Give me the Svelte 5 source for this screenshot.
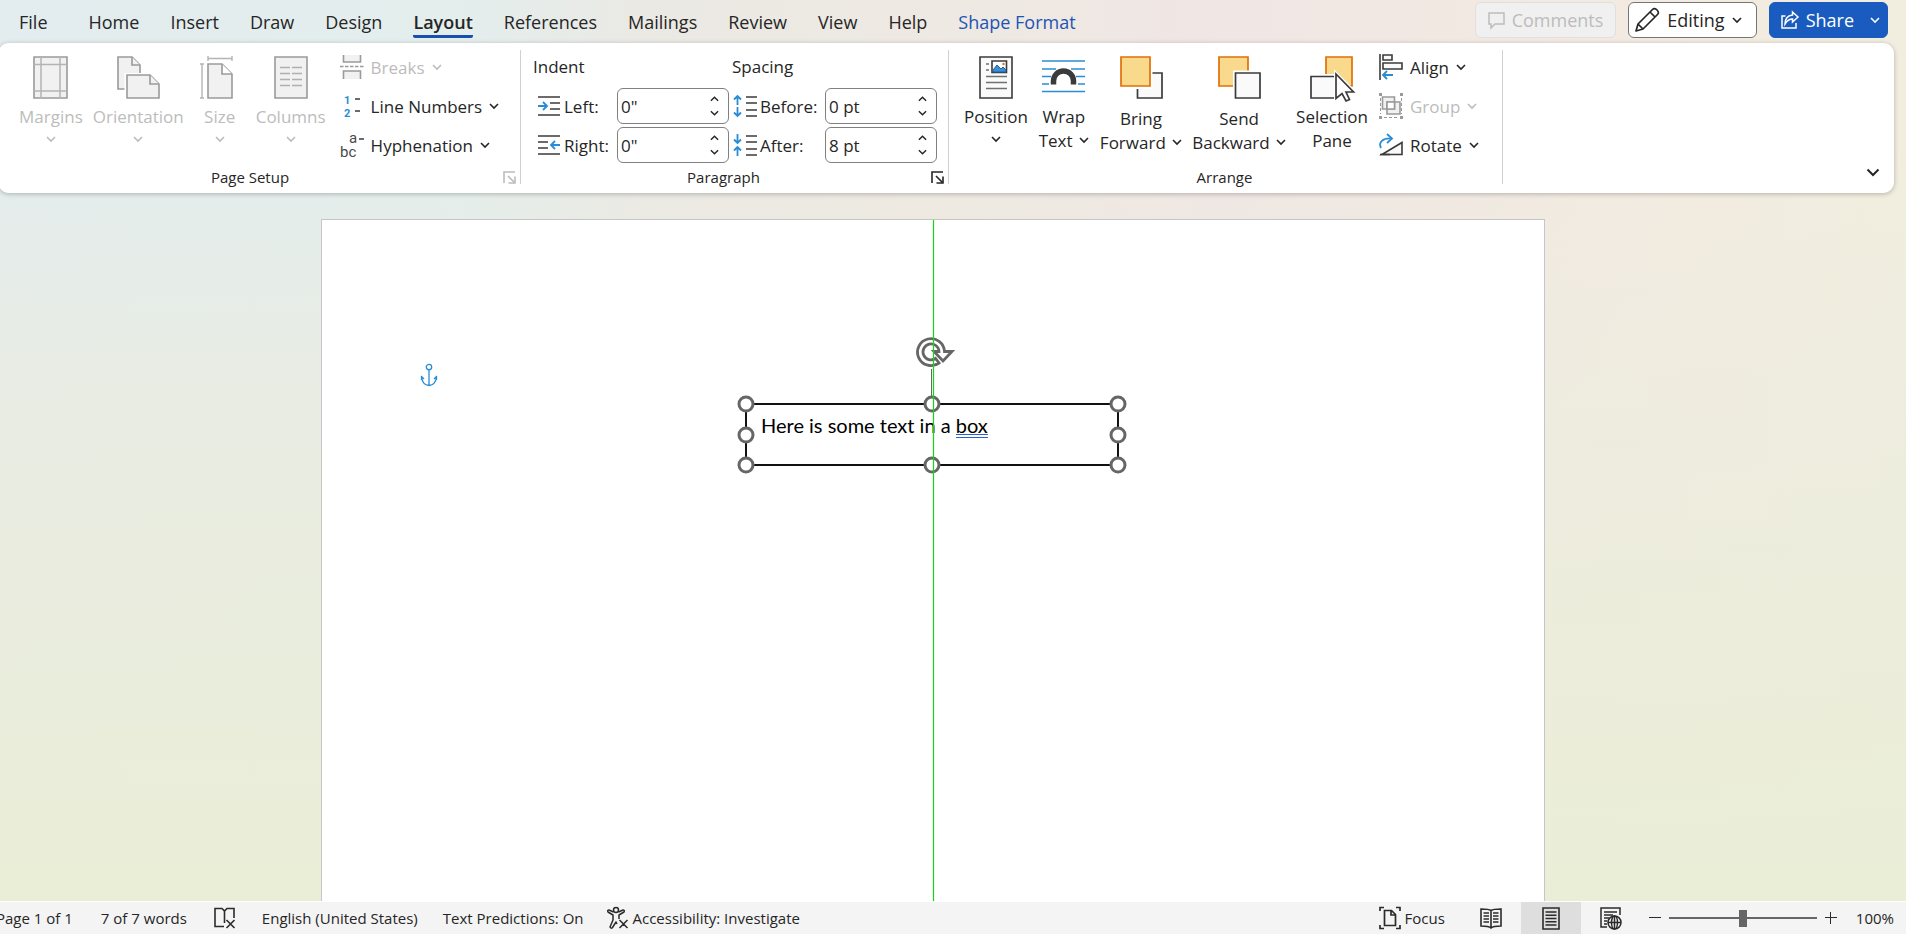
<script>
	let tabs = ["File", "Home", "Insert", "Draw", "Design", "Layout", "References", "Mailings", "Review", "View", "Help", "Shape Format"]
	let active = "Layout"
	let indentLeft = '0"'
	let indentRight = '0"'
	let before = "0 pt"
	let after = "8 pt"
	let zoom = 50
	let handles = ["nw", "n", "ne", "w", "e", "sw", "s", "se"]
</script>

{#snippet chevron()}
	<svg class="chevron" width="10" height="6" viewBox="0 0 10 6"><path d="M1 1l4 4 4-4" /></svg>
{/snippet}

{#snippet launcher()}
	<svg width="13" height="13" viewBox="0 0 13 13" fill="none" stroke="currentColor" stroke-width="1.6">
		<path d="M1 12V1h11M5 5l6 6M12 5.500v6.500H5.500" />
	</svg>
{/snippet}

<div class="window">
	<header>
		<nav>
			{#each tabs as tab}
				<button class="tab" class:active={tab == active} class:context={tab == "Shape Format"} on:click={() => active = tab}><span>{tab}</span></button>
			{/each}
		</nav>
		<div class="actions">
			<button class="action comments" disabled>
				<svg width="17" height="17" viewBox="0 0 17 17" fill="none" stroke="currentColor" stroke-width="1.5"><path d="M1 1h15v11H7l-4 4v-4H1z" /></svg>
				Comments
			</button>
			<button class="action editing">
				<svg width="26" height="26" viewBox="0 0 26 26" fill="none" stroke="currentColor" stroke-width="1.7" stroke-linejoin="round">
					<path d="M2 24l2-7L18.500 2.500q2-2 4.500.5t.5 4.500L9 22zM16 5l5 5M4 17l5 5" />
				</svg>
				Editing {@render chevron()}
			</button>
			<button class="action share">
				<svg width="18" height="18" viewBox="0 0 18 18" fill="none" stroke="currentColor" stroke-width="1.5">
					<path d="M4.500 5H1v12h14v-5M11.500 1l5.500 5-5.500 5V8Q7 8 4 13q0-8 7.500-9z" />
				</svg>
				Share <span class="share-more">{@render chevron()}</span>
			</button>
		</div>
	</header>

	<section class="ribbon">
		<div class="group setup">
			<div class="tools">
				<button class="big" disabled>
					<svg width="35" height="43" viewBox="0 0 35 43" fill="none">
						<path d="M1 1h33v41H1z" fill="#f1f1f1" stroke="#9a9a9a" stroke-width="1.600" />
						<path d="M8 1v41M27 1v41M1 8.500h33M1 35h33" stroke="#b4b4b4" stroke-width="1.500" />
					</svg>
					<span>Margins</span>
					{@render chevron()}
				</button>
				<button class="big" disabled>
					<svg width="43" height="43" viewBox="0 0 43 43" fill="#f1f1f1" stroke="#9a9a9a" stroke-width="1.600">
						<path d="M1 1h14l8 8v24H1z" />
						<path d="M15 1v8h8" />
						<path d="M7.500 17h27v26h-27z" fill="#fff" stroke="none" />
						<path d="M10 19h23l9 9v14H10z" />
						<path d="M33 19v9h9" />
					</svg>
					<span>Orientation</span>
					{@render chevron()}
				</button>
				<button class="big" disabled>
					<svg width="40" height="43" viewBox="0 0 40 43" fill="none" stroke="#9a9a9a" stroke-width="1.600">
						<path d="M8 8h14l10 10v24H8z" fill="#f1f1f1" />
						<path d="M22 8v10h10" fill="#fff" />
						<path d="M8 2.500h24M8 0v5M32 0v5M2 8v34M0 8h4M0 42h4" stroke="#b4b4b4" stroke-width="1.400" />
					</svg>
					<span>Size</span>
					{@render chevron()}
				</button>
				<button class="big" disabled>
					<svg width="34" height="43" viewBox="0 0 34 43" fill="none">
						<path d="M1 1h32v41H1z" fill="#f1f1f1" stroke="#9a9a9a" stroke-width="1.600" />
						<path d="M6 11.500h10M18 11.500h10M6 17.500h10M18 17.500h10M6 23.500h10M18 23.500h10M6 29.500h10M18 29.500h10" stroke="#b0b0b0" stroke-width="1.600" />
					</svg>
					<span>Columns</span>
					{@render chevron()}
				</button>
				<div class="stack">
					<button class="small" disabled>
						<svg width="24" height="24" viewBox="0 0 24 24" fill="#f1f1f1" stroke="#9a9a9a" stroke-width="1.600">
							<path d="M3.500 0v7h17V0M3.500 24v-8h17v8" />
							<path d="M0 11.500h24" stroke-dasharray="3.500 1.500" />
						</svg>
						Breaks {@render chevron()}
					</button>
					<button class="small">
						<svg width="24" height="24" viewBox="0 0 24 24">
							<text class="numeral" x="4" y="10">1</text>
							<text class="numeral" x="4" y="23">2</text>
							<path d="M15 5h5M15 17h5" stroke="#3b3b3b" stroke-width="1.600" />
						</svg>
						Line Numbers {@render chevron()}
					</button>
					<button class="small">
						<svg width="24" height="26" viewBox="0 0 24 26">
							<text class="letters" x="9" y="11">a</text>
							<text class="letters" x="0" y="25">bc</text>
							<path d="M19 7h5" stroke="#3b3b3b" stroke-width="1.500" />
						</svg>
						Hyphenation {@render chevron()}
					</button>
				</div>
			</div>
			<footer>Page Setup<button class="launch" disabled aria-label="Page Setup settings">{@render launcher()}</button></footer>
		</div>

		<div class="group paragraph">
			<div class="fields">
				<div class="heading">Indent</div>
				<div class="heading spacing">Spacing</div>

				<label for="indent-left">
					<svg width="24" height="24" viewBox="0 0 24 24" fill="none" stroke="#3b3b3b" stroke-width="1.600">
						<path d="M1 3h22M13 9h10M13 15h10M1 21h22" />
						<path class="blue" d="M1 12h9M6 8l4 4-4 4" />
					</svg>
					Left:
				</label>
				<div class="spin">
					<input id="indent-left" type="text" bind:value={indentLeft}>
					<div class="arrows">
						<button class="up" aria-label="Increase left indent">{@render chevron()}</button>
						<button aria-label="Decrease left indent">{@render chevron()}</button>
					</div>
				</div>
				<label for="space-before">
					<svg width="24" height="24" viewBox="0 0 24 24" fill="none" stroke="#3b3b3b" stroke-width="1.600">
						<path d="M13 3h11M13 9h11M13 16h11M13 22h11" />
						<path class="blue" d="M4.500 11V2M1 5.500L4.500 2 8 5.500M4.500 13v9M1 18.500L4.500 22 8 18.500" />
					</svg>
					Before:
				</label>
				<div class="spin">
					<input id="space-before" type="text" bind:value={before}>
					<div class="arrows">
						<button class="up" aria-label="Increase spacing before">{@render chevron()}</button>
						<button aria-label="Decrease spacing before">{@render chevron()}</button>
					</div>
				</div>

				<label for="indent-right">
					<svg width="24" height="24" viewBox="0 0 24 24" fill="none" stroke="#3b3b3b" stroke-width="1.600">
						<path d="M1 3h22M1 9h10M1 15h10M1 21h22" />
						<path class="blue" d="M14 12h9M18 8l-4 4 4 4" />
					</svg>
					Right:
				</label>
				<div class="spin">
					<input id="indent-right" type="text" bind:value={indentRight}>
					<div class="arrows">
						<button class="up" aria-label="Increase right indent">{@render chevron()}</button>
						<button aria-label="Decrease right indent">{@render chevron()}</button>
					</div>
				</div>
				<label for="space-after">
					<svg width="24" height="24" viewBox="0 0 24 24" fill="none" stroke="#3b3b3b" stroke-width="1.600">
						<path d="M13 3h11M13 9h11M13 16h11M13 22h11" />
						<path class="blue" d="M4.500 1v9M1 6.500L4.500 10 8 6.500M4.500 23v-9M1 17.500L4.500 14 8 17.500" />
					</svg>
					After:
				</label>
				<div class="spin">
					<input id="space-after" type="text" bind:value={after}>
					<div class="arrows">
						<button class="up" aria-label="Increase spacing after">{@render chevron()}</button>
						<button aria-label="Decrease spacing after">{@render chevron()}</button>
					</div>
				</div>
			</div>
			<footer>Paragraph<button class="launch" aria-label="Paragraph settings">{@render launcher()}</button></footer>
		</div>

		<div class="group arrange">
			<div class="tools">
				<button class="big">
					<svg width="34" height="43" viewBox="0 0 34 43" fill="none">
						<path d="M1 1h32v41H1z" fill="#fafafa" stroke="#3b3b3b" stroke-width="1.600" />
						<path d="M13 5h14.500v11.500H13z" fill="#fff" stroke="#3b3b3b" stroke-width="1.600" />
						<path d="M14 14l4-5 4 4 2-2 3 3v2H14z" fill="#3d8fd1" stroke="#1a5fa8" />
						<circle cx="24.500" cy="8" r="1.200" fill="#e8700a" />
						<path d="M7 8h3M7 14h3M7 20.500h21M7 26.500h21M7 32.500h21" stroke="#707070" stroke-width="1.500" />
					</svg>
					<span>Position</span>
					{@render chevron()}
				</button>
				<button class="big">
					<svg width="43" height="43" viewBox="0 0 43 43" fill="none">
						<path d="M0 5h43M0 13h14M29 13h14M0 20.500h9M34 20.500h9M0 28h7M36 28h7M0 35.500h43" stroke="#2a8dd4" stroke-width="1.700" />
						<path d="M11.500 28.500V25a10 10 0 0 1 20 0v3.500" stroke="#3b3b3b" stroke-width="5.500" />
					</svg>
					<span>Wrap<br>Text {@render chevron()}</span>
				</button>
				<button class="big split">
					<svg width="43" height="43" viewBox="0 0 43 43" stroke-width="1.700">
						<path d="M17.500 17H42v25H17.500z" fill="#fafafa" stroke="#3b3b3b" />
						<path d="M0 0h32.500v33H0z" fill="#fff" />
						<path d="M1 1h29v29H1z" fill="#f9da8d" stroke="#e0700a" />
					</svg>
					<span>Bring<br>Forward {@render chevron()}</span>
				</button>
				<button class="big split">
					<svg width="43" height="43" viewBox="0 0 43 43" stroke-width="1.700">
						<path d="M1 1h29v29H1z" fill="#f9da8d" stroke="#e0700a" />
						<path d="M15 14.500h28V43H15z" fill="#fff" />
						<path d="M17.500 17H42v25H17.500z" fill="#fafafa" stroke="#3b3b3b" />
					</svg>
					<span>Send<br>Backward {@render chevron()}</span>
				</button>
				<button class="big">
					<svg width="45" height="47" viewBox="0 0 45 47" stroke-width="1.700">
						<path d="M16 1h26v29H16z" fill="#f9da8d" stroke="#e0700a" />
						<path d="M0 18h28v24H0z" fill="#fff" />
						<path d="M1 20.500h26V42H1z" fill="#fafafa" stroke="#3b3b3b" />
						<path d="M26 18v24.500l6-5 4 8 4.500-2-4-7.500H44z" fill="#fff" stroke="#fff" stroke-width="4" />
						<path d="M26 18v24.500l6-5 4 7.500 3.500-1.500-3.500-7.500H43.500z" fill="#fff" stroke="#3b3b3b" />
					</svg>
					<span>Selection<br>Pane</span>
				</button>
				<div class="stack">
					<button class="small">
						<svg width="24" height="26" viewBox="0 0 24 26" fill="#fafafa" stroke="#3b3b3b" stroke-width="1.600">
							<path d="M1 0v26M4 1h9v5H4zM4 9h19v6H4z" />
							<path class="blue" fill="none" d="M14 21H4M8 17l-4 4 4 4" />
						</svg>
						Align {@render chevron()}
					</button>
					<button class="small" disabled>
						<svg width="24" height="26" viewBox="0 0 24 26" fill="#f1f1f1" stroke="#9a9a9a" stroke-width="1.600">
							<path d="M3.500 4h12v12h-12zM8 9h13v12H8z" />
							<path d="M8 9h7.500v7H8z" fill="#fff" />
							<path d="M0 1.500h3M21 1.500h3M0 24.500h3M21 24.500h3" stroke-width="3" />
							<path d="M5 24.500h15M1.500 5v16M22.500 5v16" stroke-width="1" stroke-dasharray="3 2" />
						</svg>
						Group {@render chevron()}
					</button>
					<button class="small">
						<svg width="24" height="26" viewBox="0 0 24 26" fill="none" stroke="#3b3b3b" stroke-width="1.600">
							<path d="M3 22.500L23 10.500v12z" fill="#fafafa" />
							<path d="M1 22.500h10" />
							<path class="blue" d="M2 16C-1 10 4 6 12 6.500M8 2l5 4.500L8 11" />
						</svg>
						Rotate {@render chevron()}
					</button>
				</div>
			</div>
			<footer>Arrange</footer>
		</div>
		<button class="collapse" aria-label="Collapse ribbon">
			<svg width="14" height="9" viewBox="0 0 14 9" fill="none" stroke="currentColor" stroke-width="2"><path d="M1.500 1.500L7 7l5.500-5.500" /></svg>
		</button>
	</section>

	<main>
		<article class="page">
			<svg class="anchor" width="18" height="24" viewBox="0 0 18 24" fill="none" stroke="#2a8dd4" stroke-width="1.300">
				<circle cx="9" cy="4" r="2.700" />
				<path d="M9 7v15.500M1.500 17V13.500M1 13l3 3M16.500 17V13.500M17 13l-3 3M1.500 14Q2.500 22 9 22.500 15.500 22 16.500 14" />
			</svg>
			<div class="textbox">
				<p>Here is some text in a <span class="grammar">box</span></p>
				<div class="stem"></div>
				<svg class="rotate" width="40" height="32" viewBox="0 0 40 32" fill="none">
					<path d="M24.500 26.500A13 13 0 1 1 29 15.500h7.500L28 24.500l-7.500-9h3A7.500 7.500 0 1 0 20.500 22.500z" fill="#fff" />
					<path d="M24 27A13.500 13.500 0 1 1 29.500 15.500H37L28 25l-9-9.500h5A8 8 0 1 0 20.500 22.500z" stroke="#666" stroke-width="2.800" />
				</svg>
				{#each handles as handle}
					<i class="handle {handle}"></i>
				{/each}
			</div>
			<div class="guide"></div>
		</article>
	</main>

	<div class="status">
		<button class="pages">Page 1 of 1</button>
		<button class="words">7 of 7 words</button>
		<button class="proof" aria-label="Proofing errors">
			<svg width="24" height="22" viewBox="0 0 24 22" fill="none" stroke="#2b2b2b" stroke-width="1.600">
				<path d="M11 19.500H2V1.500h7L11.500 4 14 1.500h7V11M11.500 4v12M13.500 13l8 8M21.500 13l-8 8" />
			</svg>
		</button>
		<button class="language">English (United States)</button>
		<button class="predictions">Text Predictions: On</button>
		<button class="access">
			<svg width="24" height="24" viewBox="0 0 24 24" fill="none" stroke="#2b2b2b" stroke-width="1.500" stroke-linejoin="round">
				<circle cx="10" cy="4" r="2.500" />
				<path d="M7.500 6L3 4Q1 4 2 6l5 3v5l-3 7q1 2 2.500.5L10 16l1 2M12.500 6L17 4q2 0 1 2l-5 3v4M13.500 14l8 8M21.500 14l-8 8" />
			</svg>
			Accessibility: Investigate
		</button>
		<div class="views">
			<button class="focus">
				<svg width="22" height="24" viewBox="0 0 22 24" fill="none" stroke="#2b2b2b" stroke-width="1.700">
					<path d="M5 1.500H1V5M17 1.500h4V5M5 22.500H1V19M17 22.500h4V19M5.500 4.500h7l4 4v11h-11zM12 4.500V9h4.500" />
				</svg>
				Focus
			</button>
			<button class="view" aria-label="Read Mode">
				<svg width="22" height="22" viewBox="0 0 22 22" fill="none" stroke="#2b2b2b" stroke-width="1.600">
					<path d="M11 3.500Q9 2 1 2v17q8 0 10 2 2-2 10-2V2q-8 0-10 1.500v17" />
					<path d="M3.500 6H9M3.500 9H9M3.500 12H9M3.500 15H9M13 6h5.500M13 9h5.500M13 12h5.500M13 15h5.500" stroke-width="1.300" />
				</svg>
			</button>
			<button class="view current" aria-label="Print Layout">
				<svg width="18" height="23" viewBox="0 0 18 23" fill="none" stroke="#2b2b2b" stroke-width="1.600">
					<path d="M1 1h16v21H1zM3.500 5h11M3.500 8.200h11M3.500 11.500h11M3.500 14.700h11M3.500 18h11" />
				</svg>
			</button>
			<button class="view" aria-label="Web Layout">
				<svg width="22" height="23" viewBox="0 0 22 23" fill="none" stroke="#2b2b2b" stroke-width="1.500">
					<path d="M7 20H1V1h19v7M4 5h13M4 8h9M4 11h5M4 14h3M4 17h3" />
					<circle cx="14.500" cy="15.500" r="6.500" />
					<path d="M8 15.500h13M14.500 9v13" />
					<ellipse cx="14.500" cy="15.500" rx="3" ry="6.500" />
				</svg>
			</button>
			<div class="zoom">
				<button aria-label="Zoom out"><svg width="12" height="12" viewBox="0 0 12 12" stroke="#2b2b2b"><path d="M0 5.500h12" /></svg></button>
				<input type="range" aria-label="Zoom" min="0" max="100" bind:value={zoom}>
				<button aria-label="Zoom in"><svg width="12" height="12" viewBox="0 0 12 12" stroke="#2b2b2b"><path d="M0 5.500h12M5.500 0v12" /></svg></button>
			</div>
			<button class="percent">100%</button>
		</div>
	</div>
</div>

<style>
	:global(body) {
		margin: 0;
		overflow: hidden;
	}
	.window {
		height: 100vh;
		display: flex;
		flex-direction: column;
		overflow: hidden;
		font-family: "Open Sans", "Noto Sans", sans-serif;
		font-size: 17px;
		color: #262626;
		background:
			linear-gradient(to bottom, rgba(235,239,214,0) 15%, rgba(236,236,222,0.7) 45%, #eaeed7 95%),
			linear-gradient(to right, #e3ecee 0%, #e3eeed 24%, #ebe9e4 34%, #eee9e2 50%, #f0e6e4 64%, #f3ebe1 88%, #f1eedf 100%);
	}
	button {
		margin: 0;
		padding: 0;
		border: 0;
		background: none;
		color: inherit;
		font: inherit;
		white-space: nowrap;
	}
	button:disabled {
		color: #bcbcbc;
	}
	svg {
		flex: none;
		overflow: visible;
	}
	.chevron {
		fill: none;
		stroke: currentColor;
		stroke-width: 1.6;
	}
	.blue {
		stroke: #2a8dd4;
		stroke-width: 1.8;
	}

	header {
		height: 43px;
		flex: none;
		display: flex;
		justify-content: space-between;
		align-items: flex-start;
	}
	nav {
		display: flex;
		gap: 1px;
		padding-left: 4px;
	}
	.tab {
		height: 39px;
		padding: 4px 15px 0;
		font-size: 18px;
	}
	.tab:first-child {
		margin-right: 10px;
	}
	.tab span {
		display: block;
		height: 30px;
		line-height: 34px;
		border-bottom: 3px solid transparent;
		border-radius: 2px;
	}
	.tab.active span {
		font-weight: 600;
		border-color: #1b4fae;
	}
	.tab.context {
		color: #1d54b4;
	}
	.actions {
		display: flex;
		gap: 12px;
		padding: 2px 18px 0 0;
	}
	.action {
		box-sizing: border-box;
		height: 36px;
		display: flex;
		align-items: center;
		border: 1px solid #dfdfdf;
		border-radius: 6px;
		font-size: 18px;
	}
	.comments {
		gap: 7px;
		padding: 0 12px;
		background: #f0f0f0;
	}
	.editing {
		gap: 7px;
		padding: 0 14px 0 5px;
		background: #fff;
		border-color: #757575;
	}
	.share {
		gap: 7px;
		padding: 0 7px 0 11px;
		background: #1a5bbf;
		border-color: #1a5bbf;
		color: #fff;
	}
	.share-more {
		display: flex;
		margin-left: 9px;
	}

	.ribbon {
		height: 150px;
		flex: none;
		box-sizing: border-box;
		display: flex;
		margin: 0 12px 0 -2px;
		padding: 7px 0 9px 2px;
		background: #fff;
		border-radius: 11px;
		box-shadow: 0 1px 5px rgba(0,0,0,0.25);
	}
	.group {
		display: flex;
		flex-direction: column;
		justify-content: space-between;
		box-sizing: border-box;
		border-right: 1px solid #d0d0d0;
	}
	.setup {
		width: 521px;
		padding-left: 14px;
	}
	.paragraph {
		width: 428px;
		padding-left: 12px;
	}
	.arrange {
		width: 554px;
		padding-left: 10px;
	}
	.tools {
		display: flex;
		align-items: flex-start;
	}
	.big {
		display: flex;
		flex-direction: column;
		align-items: center;
		min-width: 62px;
		padding: 6px 5px 0;
	}
	.big > svg:first-child {
		margin-bottom: 6px;
	}
	.big > span {
		line-height: 24px;
	}
	.big > .chevron {
		margin-top: 7px;
	}
	.big > svg[height="47"]:first-child {
		margin-bottom: 2px;
	}
	.big.split > span {
		padding-top: 2px;
	}
	.big span .chevron {
		margin: 0 0 4px 2px;
	}
	.stack {
		padding-left: 9px;
	}
	.arrange .stack {
		padding-left: 6px;
	}
	.small {
		display: flex;
		align-items: center;
		gap: 7px;
		height: 39px;
		box-sizing: border-box;
		padding-bottom: 5px;
	}
	.numeral {
		font-family: Roboto, sans-serif;
		font-size: 11px;
		font-weight: 700;
		fill: #2a8dd4;
	}
	.letters {
		font-family: Roboto, sans-serif;
		font-size: 15px;
		fill: #4a4a4a;
	}
	.group footer {
		display: flex;
		justify-content: center;
		position: relative;
		margin-left: -12px;
		font-size: 15px;
		line-height: 20px;
		height: 17px;
	}
	.setup footer,
	.paragraph footer {
		padding-right: 22px;
	}
	.launch {
		position: absolute;
		right: 4px;
		bottom: 0;
		display: flex;
	}
	.fields {
		display: grid;
		grid-template-columns: 84px 112px 96px 112px;
		grid-template-rows: 35px 36px 36px;
		row-gap: 3px;
		align-items: center;
	}
	.fields label {
		display: flex;
		align-items: center;
		gap: 3px;
		padding-left: 4px;
	}
	.heading {
		grid-column: span 2;
		padding-bottom: 3px;
	}
	.heading.spacing {
		padding-left: 3px;
	}
	.spin {
		display: flex;
		height: 36px;
		box-sizing: border-box;
		border: 1px solid #808080;
		border-radius: 6px;
		background: #fff;
	}
	.spin input {
		width: 100%;
		min-width: 0;
		border: 0;
		padding: 0 0 0 3px;
		background: none;
		font: inherit;
		color: inherit;
		outline: none;
	}
	.arrows {
		display: flex;
		flex-direction: column;
		justify-content: space-evenly;
		padding-right: 9px;
	}
	.arrows button {
		display: flex;
	}
	.arrows .chevron {
		width: 9px;
	}
	.up .chevron {
		transform: rotate(180deg);
	}
	.collapse {
		align-self: flex-end;
		margin: 0 14px 7px auto;
		display: flex;
	}

	main {
		flex: 1;
		min-height: 0;
		padding: 26px 40px 0 0;
		display: flex;
		justify-content: center;
	}
	.page {
		position: relative;
		width: 1224px;
		max-width: 100%;
		box-sizing: border-box;
		background: #fff;
		border: 1px solid #c6c6c6;
		border-bottom: 0;
	}
	.anchor {
		position: absolute;
		left: 98px;
		top: 143px;
	}
	.guide {
		position: absolute;
		left: 611px;
		top: 0;
		bottom: 0;
		width: 1px;
		background: #14d714;
		box-shadow: 0 0 1px #14d714;
	}
	.textbox {
		position: absolute;
		left: 423px;
		top: 183px;
		width: 374px;
		height: 63px;
		box-sizing: border-box;
		border: 2px solid #111;
		font-family: Lato, "Open Sans", sans-serif;
		font-size: 20px;
		color: #000;
	}
	.textbox p {
		margin: 0;
		padding: 7px 14px;
		line-height: 26px;
	}
	.grammar {
		display: inline-block;
		line-height: 18px;
		border-bottom: 4px double #2b5fd0;
	}
	.stem {
		position: absolute;
		left: 184px;
		top: -36px;
		width: 1px;
		height: 28px;
		background: #666;
	}
	.rotate {
		position: absolute;
		left: 168px;
		top: -69px;
	}
	.handle {
		position: absolute;
		width: 17px;
		height: 17px;
		box-sizing: border-box;
		border: 3px solid #666;
		border-radius: 50%;
		background: #fff;
		transform: translate(-50%, -50%);
	}
	.nw, .n, .ne { top: -1px; }
	.w, .e { top: 50%; }
	.sw, .s, .se { top: 60px; }
	.nw, .w, .sw { left: -1px; }
	.n, .s { left: 50%; }
	.ne, .e, .se { left: 371px; }

	.status {
		height: 32px;
		flex: none;
		display: flex;
		align-items: center;
		border-top: 1px solid #fff;
		background: #f4f4f4;
		font-size: 15px;
	}
	.status button {
		display: flex;
		align-items: center;
		height: 100%;
	}
	.status .pages {
		margin-left: -4px;
	}
	.status .words {
		padding: 0 26px 0 28px;
	}
	.status .language {
		padding: 0 25px;
	}
	.status .access {
		gap: 3px;
		padding-left: 22px;
	}
	.views {
		display: flex;
		align-items: center;
		height: 100%;
		margin-left: auto;
		padding-right: 12px;
	}
	.status .focus {
		gap: 4px;
		padding-right: 16px;
	}
	.status .view {
		width: 60px;
		justify-content: center;
	}
	.status .current {
		background: #dedede;
	}
	.zoom {
		display: flex;
		align-items: center;
		gap: 8px;
		height: 100%;
		padding: 0 19px 0 8px;
	}
	.zoom input {
		appearance: none;
		width: 148px;
		height: 18px;
		margin: 0;
		background: linear-gradient(#666, #666) center / 100% 2px no-repeat;
	}
	.zoom input::-webkit-slider-thumb {
		appearance: none;
		width: 8px;
		height: 17px;
		background: #666;
	}
</style>
